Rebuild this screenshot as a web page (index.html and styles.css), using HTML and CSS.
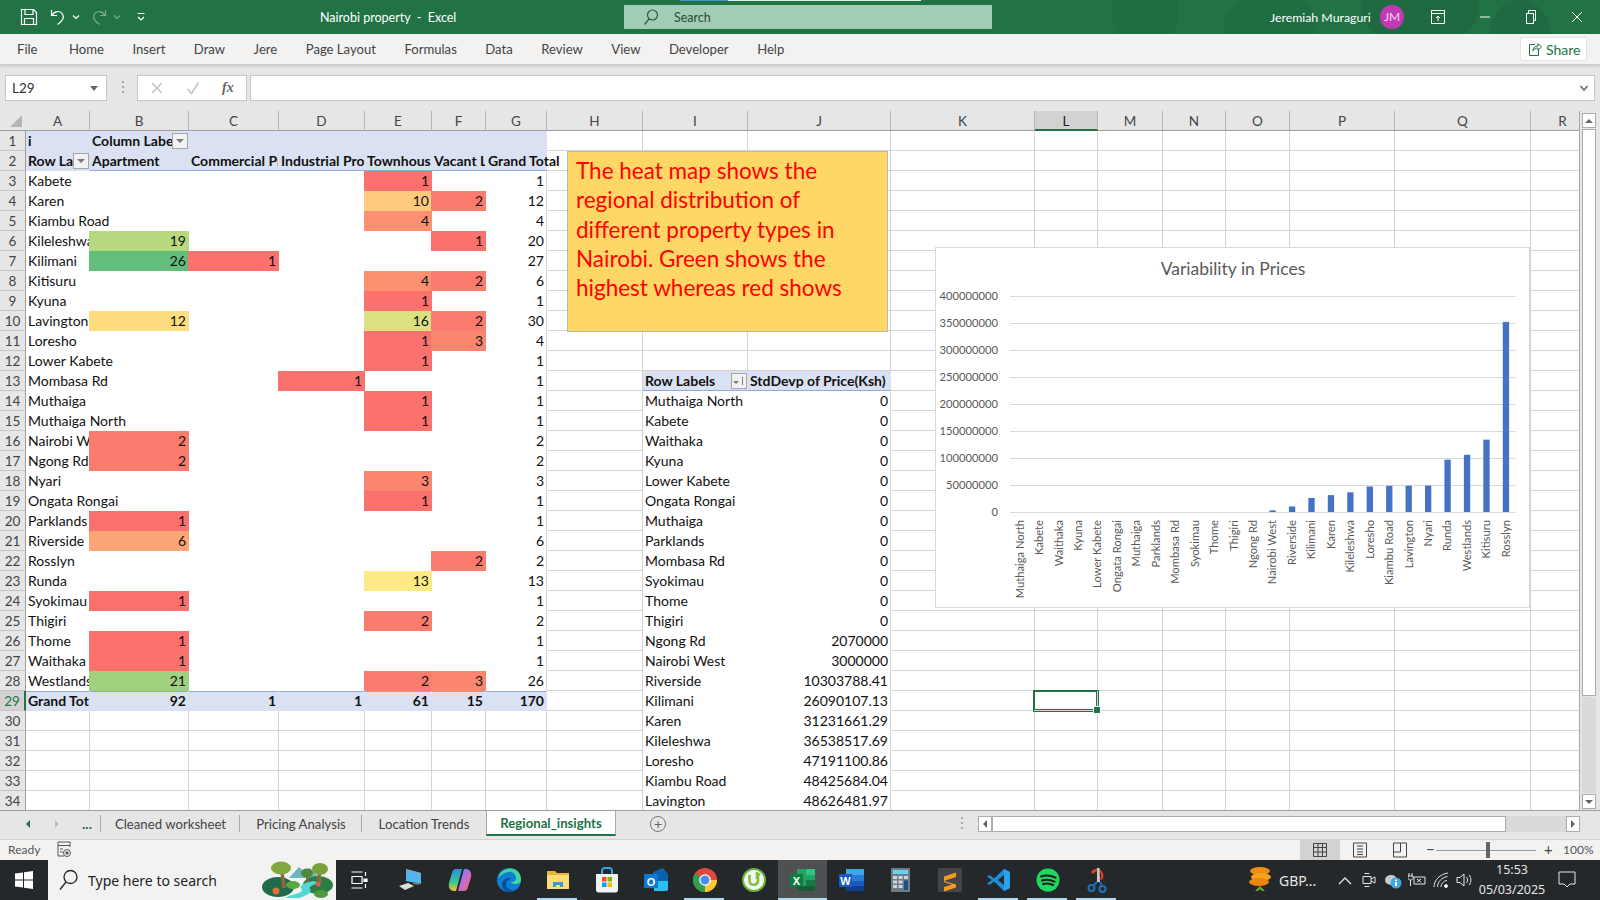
FILE: index.html
```html
<!DOCTYPE html>
<html lang="en">
<head>
    <meta charset="UTF-8">
    <title>Nairobi property - Excel</title>
    <link rel="stylesheet" href="styles.css">
</head>
<body>
    <header class="titlebar">
        <div class="qat">
            <svg class="qat-save" width="18" height="18" viewBox="0 0 18 18"><path d="M1.500 1.500h12l3 3v12h-15z"/><path d="M5 1.500v5h8v-5M4.500 16.500v-6h9v6"/></svg>
            <svg class="qat-undo" width="18" height="18" viewBox="0 0 18 18"><path d="M2.500 2v5.500H8M3 7.500C5 3 11 2 13.500 6c2 3.500-.5 7.500-5 10.500"/></svg>
            <svg class="qat-caret" width="8" height="6" viewBox="0 0 8 6"><path d="M1 1.500l3 3 3-3"/></svg>
            <svg class="qat-undo dim" width="18" height="18" viewBox="0 0 18 18"><path d="M15.500 2v5.500H10M15 7.500C13 3 7 2 4.500 6c-2 3.500.5 7.500 5 10.500"/></svg>
            <svg class="qat-caret dim" width="8" height="6" viewBox="0 0 8 6"><path d="M1 1.500l3 3 3-3"/></svg>
            <svg class="qat-more" width="10" height="10" viewBox="0 0 10 10"><path d="M1.500 1.500h7M2 5l3 3 3-3"/></svg>
        </div>
        <div class="doc-title">Nairobi property &nbsp;-&nbsp; Excel</div>
        <div class="search">
            <svg width="16" height="18" viewBox="0 0 16 18"><circle cx="9.500" cy="7" r="5"/><path d="M6 11l-4.500 5.500"/></svg>
            <span>Search</span>
        </div>
        <div class="account">
            <span class="user-name">Jeremiah Muraguri</span>
            <span class="avatar">JM</span>
            <svg class="win-icon display" width="14" height="14" viewBox="0 0 14 14"><path d="M.5.500h13v13H.5zM.5 3.500h13M7 11V6M5 8l2-2 2 2"/></svg>
            <svg class="win-icon" width="12" height="12" viewBox="0 0 12 12"><path d="M1 6h10"/></svg>
            <svg class="win-icon" width="12" height="14" viewBox="0 0 12 14"><path d="M1.500 3.500h7v10h-7zM3.500 3.500v-3h7v10h-2"/></svg>
            <svg class="win-icon" width="12" height="12" viewBox="0 0 12 12"><path d="M1 1l10 10M11 1L1 11"/></svg>
        </div>
    </header>

    <nav class="ribbon">
        <span class="file-tab">File</span>
        <span>Home</span>
        <span>Insert</span>
        <span>Draw</span>
        <span>Jere</span>
        <span>Page Layout</span>
        <span>Formulas</span>
        <span>Data</span>
        <span>Review</span>
        <span>View</span>
        <span>Developer</span>
        <span>Help</span>
        <button class="share">
            <svg width="14" height="16" viewBox="0 0 14 16"><path d="M7 3.500H1.500v11h9V9M5 10c0-3 2-5 5-5V2.500L13.500 6 10 9V7c-2 0-4 1-5 3z"/></svg>
            Share
        </button>
    </nav>

    <div class="formula-row">
        <div class="name-box">L29<i class="caret"></i></div>
        <div class="grip"></div>
        <div class="fx-box">
            <svg width="14" height="14" viewBox="0 0 14 14"><path d="M2 2l10 10M12 2L2 12"/></svg>
            <svg width="14" height="14" viewBox="0 0 14 14"><path d="M1.500 8l4 4.500 7-11"/></svg>
            <em>fx</em>
        </div>
        <div class="formula-input"><svg width="10" height="8" viewBox="0 0 10 8"><path d="M1.500 2L5 6l3.500-4"/></svg></div>
    </div>

    <main class="workspace">
        <div class="sheet" id="sheet">
            <div class="cells" id="cells"></div>
            <div class="note">The heat map shows the<br>regional distribution of<br>different property types in<br>Nairobi. Green shows the<br>highest whereas red shows</div>
            <div class="chart"><svg id="chart" width="593" height="359" viewBox="0 0 593 359"></svg></div>
        </div>
        <div class="vscroll">
            <div class="sb-btn"><i class="tri up"></i></div>
            <div class="sb-thumb"></div>
            <div class="sb-track"></div>
            <div class="sb-btn"><i class="tri down"></i></div>
        </div>
    </main>

    <div class="tabbar">
        <div class="tab-nav">
            <i class="tri left green"></i>
            <i class="tri right pale"></i>
            <b>...</b>
        </div>
        <div class="tab">Cleaned worksheet</div>
        <div class="tab">Pricing Analysis</div>
        <div class="tab">Location Trends</div>
        <div class="tab current">Regional_insights</div>
        <div class="add-sheet">+</div>
        <div class="tab-split"></div>
        <div class="hscroll">
            <div class="sb-btn"><i class="tri left"></i></div>
            <div class="hs-thumb"></div>
            <div class="hs-track"></div>
            <div class="sb-btn"><i class="tri right"></i></div>
        </div>
    </div>

    <footer class="statusbar">
        <span class="ready">Ready</span>
        <svg class="macro" width="15" height="18" viewBox="0 0 15 18"><path d="M1 1h12v5M1 1v14h6M1 4.500h12M3 8h3M3 11h3"/><circle cx="10" cy="12" r="3.500"/><circle cx="10" cy="12" r="1.200" class="solid"/></svg>
        <div class="view-btns">
            <span class="view-btn on"><svg width="14" height="16" viewBox="0 0 14 16"><path d="M.5 1.500h13v13H.5zM.5 5.500h13M.5 10h13M5 1.500v13M9.500 1.500v13"/></svg></span>
            <span class="view-btn"><svg width="14" height="16" viewBox="0 0 14 16"><path d="M.5 1h13v14H.5zM4 4h6M4 7h6M4 10h6M4 12.500h6"/></svg></span>
            <span class="view-btn"><svg width="14" height="16" viewBox="0 0 14 16"><path d="M.5 1h13v14H.5zM.5 10h7V1"/></svg></span>
        </div>
        <span class="zoom-sign minus">&minus;</span>
        <div class="slider"><i></i></div>
        <span class="zoom-sign">+</span>
        <span class="zoom-level">100%</span>
    </footer>

    <div class="taskbar">
        <div class="start">
            <svg width="18" height="18" viewBox="0 0 18 18"><path d="M0 2.500l8-1.100v7.100H0zM9 1.200L18 0v8.500H9zM0 9.500h8v7.100l-8-1.100zM9 9.500h9V18l-9-1.200z"/></svg>
        </div>
        <div class="task-search">
            <svg width="20" height="22" viewBox="0 0 20 22"><circle cx="12.500" cy="8" r="6.500"/><path d="M8 13l-6 7.500"/></svg>
            <span>Type here to search</span>
            <svg class="scene" width="74" height="40" viewBox="0 0 74 40">
                <path d="M28 18l10-11 6 5 5-4 9 10z" fill="#6fb2c4"/>
                <ellipse cx="17" cy="27" rx="16" ry="10" fill="#1f6a4a"/>
                <ellipse cx="57" cy="25" rx="15" ry="9" fill="#2a7d45"/>
                <path d="M19 8h3l3 20h-4z" fill="#8a6a3a"/>
                <path d="M57 8h2.500l1 16h-4.500z" fill="#8a6a3a"/>
                <path d="M45 14h2l1 9h-3z" fill="#8a6a3a"/>
                <ellipse cx="20" cy="8" rx="10" ry="6.500" fill="#7fa83f"/>
                <ellipse cx="59" cy="9" rx="8" ry="6" fill="#7aa23c"/>
                <ellipse cx="46" cy="13" rx="6" ry="4.500" fill="#4f8a3a"/>
                <path d="M24 38c8-5 20-4 16-10-2-3 6-6 13-7l5 2c-6 2-10 3-9 6 3 5-7 7-10 9z" fill="#54d6d6"/>
                <ellipse cx="32" cy="25" rx="7" ry="4" fill="#5aa63f"/>
                <ellipse cx="60" cy="34" rx="7" ry="4" fill="#4f9a3f"/>
                <circle cx="15" cy="31" r="3.500" fill="#e0703a"/>
                <circle cx="57" cy="24" r="2.500" fill="#d9604a"/>
            </svg>
        </div>
        <div class="task-app wide">
            <svg width="18" height="18" viewBox="0 0 18 18" class="line"><path d="M.5 1h11M.5 17h11M1 5.500h10v7H1zM14.500 1v4M14.500 13v4"/><path d="M13 8h3v2.500h-3z" fill="#fff"/></svg>
        </div>
        <div class="task-apps">
            <div class="task-app">
                <svg width="26" height="26" viewBox="0 0 26 26"><path d="M8 2l15 4v11l-15-3z" fill="#53b5f0"/><path d="M8 2l15 4v1L8 3z" fill="#9a9a9a"/><path d="M15 15l6 1v2l-6-1z" fill="#777"/><path d="M1 19l9-3 6 3-9 4z" fill="#ddd"/></svg>
            </div>
            <div class="task-app">
                <svg width="26" height="26" viewBox="0 0 26 26">
                    <defs>
                        <linearGradient id="cpA" x1="0" y1="0" x2="0" y2="1"><stop offset="0" stop-color="#2a8fe0"/><stop offset=".6" stop-color="#36c98f"/><stop offset="1" stop-color="#f6c02c"/></linearGradient>
                        <linearGradient id="cpB" x1="0" y1="0" x2="1" y2="1"><stop offset="0" stop-color="#5f8cf0"/><stop offset=".5" stop-color="#c26bd8"/><stop offset="1" stop-color="#f0703a"/></linearGradient>
                    </defs>
                    <path d="M9 2h6l-6 22H7C3 24 1 20 2 16l3-10c.6-2.500 2-4 4-4z" fill="url(#cpA)"/>
                    <path d="M17 24h-6l6-22h2c4 0 6 4 5 8l-3 10c-.6 2.500-2 4-4 4z" fill="url(#cpB)"/>
                </svg>
            </div>
            <div class="task-app">
                <svg width="26" height="26" viewBox="0 0 26 26"><circle cx="13" cy="13" r="12" fill="#0f7fd0"/><path d="M2 11C4 3 12 0 18 2c5 2 7 6 7 11 0 3-3 4-6 4-2 0-4-1-4-2 3 0 5-1 5-4 0-4-4-7-8-6-5 1-8 4-10 6z" fill="#42d6a0"/><path d="M10 24c-4-2-5-7-3-10 2-3 6-4 9-2-3 0-6 2-6 5 0 4 4 7 9 6-3 2-6 2-9 1z" fill="#0a4f9a"/></svg>
            </div>
            <div class="task-app open">
                <svg width="24" height="24" viewBox="0 0 24 24"><path d="M1 3h8l2 2h12v16H1z" fill="#e9b53a"/><path d="M1 7h22v14H1z" fill="#fbdd77"/><path d="M7 19v-5h10v5h-3v-2h-4v2z" fill="#3a96dd"/></svg>
            </div>
            <div class="task-app">
                <svg width="24" height="26" viewBox="0 0 24 26"><path d="M7 8V4c0-2 1-3 3-3h4c2 0 3 1 3 3v4" fill="none" stroke="#35a7e0" stroke-width="2"/><path d="M1 7h22v16c0 1.500-1 2.500-2.500 2.500h-17C2 25.500 1 24.500 1 23z" fill="#f2f2f2"/><path d="M7 10h4.500v4.500H7z" fill="#f25022"/><path d="M12.500 10H17v4.500h-4.500z" fill="#7fba00"/><path d="M7 15.500h4.500V20H7z" fill="#00a4ef"/><path d="M12.500 15.500H17V20h-4.500z" fill="#ffb900"/></svg>
            </div>
            <div class="task-app">
                <svg width="26" height="26" viewBox="0 0 26 26"><path d="M10 5l10-4 5 6v15c0 1-1 2-2 2H11z" fill="#0a62b0"/><path d="M11 14h14v8c0 1-1 2-2 2H11z" fill="#28c1ee"/><path d="M1 7h14v14H1z" fill="#0f78d4"/><text x="8" y="18.500" class="tile-letter">O</text></svg>
            </div>
            <div class="task-app open">
                <svg width="24" height="24" viewBox="0 0 24 24"><circle cx="12" cy="12" r="12" fill="#dd4b3d"/><path d="M12 12l-10.400 6A12 12 0 0 1 2 5.500z" fill="#2f9e4f"/><path d="M12 12l-10.400 6A12 12 0 0 0 12 24z" fill="#2f9e4f"/><path d="M12 12h12a12 12 0 0 1-12 12z" fill="#fcc934"/><circle cx="12" cy="12" r="5.800" fill="#fff"/><circle cx="12" cy="12" r="4.500" fill="#4a8af4"/></svg>
            </div>
            <div class="task-app">
                <svg width="24" height="24" viewBox="0 0 24 24"><circle cx="12" cy="12" r="11" fill="#f4f7ee" stroke="#6cb33f" stroke-width="2"/><path d="M7.500 7v6c0 5 8 5 8.500 0V7M15 4v7M18 6l-3 1" fill="none" stroke="#7ec04a" stroke-width="2.600"/></svg>
            </div>
            <div class="task-app active open">
                <svg width="26" height="24" viewBox="0 0 26 24"><path d="M7 1h18v22H7z" fill="#21a366"/><path d="M16 1h9v6h-9z" fill="#33c481"/><path d="M16 12h9v6h-9z" fill="#107c41"/><path d="M7 18h18v5H7z" fill="#185c37"/><path d="M0 6h13v13H0z" fill="#107c41"/><text x="6.500" y="16.500" class="tile-letter">X</text></svg>
            </div>
            <div class="task-app">
                <svg width="26" height="24" viewBox="0 0 26 24"><path d="M7 1h18v6H7z" fill="#41a5ee"/><path d="M7 7h18v6H7z" fill="#2b7cd3"/><path d="M7 13h18v5H7z" fill="#185abd"/><path d="M7 18h18v5H7z" fill="#103f91"/><path d="M0 6h13v13H0z" fill="#185abd"/><text x="6.500" y="16.500" class="tile-letter">W</text></svg>
            </div>
            <div class="task-app">
                <svg width="19" height="24" viewBox="0 0 19 24"><path d="M0 0h19v24H0z" fill="#6f7c85"/><path d="M2 2h15v4H2z" fill="#68d2ee"/><path d="M2 8h4v3H2zM7.500 8h4v3h-4zM13 8h4v3h-4zM2 12.500h4v3H2zM7.500 12.500h4v3h-4zM2 17h4v3H2zM7.500 17h4v3h-4z" fill="#ccd6dd"/><path d="M13 12.500h4V22h-4z" fill="#1a4f8a"/></svg>
            </div>
            <div class="task-app">
                <svg width="24" height="24" viewBox="0 0 24 24"><rect width="24" height="24" rx="2" fill="#454545"/><path d="M6 8.500l12-4v4.500l-12 4zM6 13l12 3.500v3l-12 4v-4.500l8-2.500-8-2.200z" fill="#f89a1c"/></svg>
            </div>
            <div class="task-app open">
                <svg width="24" height="24" viewBox="0 0 24 24"><path d="M17 1l6 3v16l-6 3-10-9.500-4.500 3.500L0 15.500 5 12 0 8.500 2.500 7 7 10.500z" fill="#1b8ddb"/><path d="M17 7l-6 5 6 5z" fill="#262626"/><path d="M17 1l6 3v16l-6 3z" fill="#2aa3ef"/></svg>
            </div>
            <div class="task-app open">
                <svg width="24" height="24" viewBox="0 0 24 24"><circle cx="12" cy="12" r="11.500" fill="#1ed760"/><path d="M5 8.500c5-1.500 10-1 14.500 1.200M6 12.500c4.500-1.200 8.500-.8 12.500 1.200M7 16c3.500-1 7-.6 10 1" fill="none" stroke="#1a1a1a" stroke-width="2" stroke-linecap="round"/></svg>
            </div>
            <div class="task-app open">
                <svg width="22" height="26" viewBox="0 0 22 26"><path d="M5 5c2-3 5-4 8-3 4 2 6 7 3 11l-2-1c2-3 1-7-2-8-2 0-3 1-5 3z" fill="#d8401f"/><path d="M11 1h2.500l.5 14h-3z" fill="#c9c9c9"/><path d="M11 15l-3 3M14 15l2 3" stroke="#1b72c0" stroke-width="2"/><circle cx="5.500" cy="21" r="3" fill="none" stroke="#1b72c0" stroke-width="2"/><circle cx="16.500" cy="22" r="3" fill="none" stroke="#1b72c0" stroke-width="2"/></svg>
            </div>
        </div>
        <div class="tray">
            <div class="ticker">
                <svg width="24" height="28" viewBox="0 0 24 28"><ellipse cx="12" cy="5" rx="10" ry="4" fill="#f28c13"/><ellipse cx="13" cy="11" rx="10" ry="4" fill="#f8a11f"/><ellipse cx="11" cy="16" rx="10" ry="4" fill="#ee8510"/><path d="M7 25l5-5 5 5h-3l-2-2-2 2z" fill="#6faf2c"/></svg>
                <span>GBP...</span>
            </div>
            <svg class="tray-icon chevron" width="14" height="9" viewBox="0 0 14 9"><path d="M1 8l6-6 6 6"/></svg>
            <svg class="tray-icon meet" width="15" height="18" viewBox="0 0 15 18"><path d="M1 5.500h8v7H1zM9 8l4-2v6l-4-2M2.500 2.500h5M2.500 15.500h5"/></svg>
            <svg class="onedrive" width="18" height="18" viewBox="0 0 18 18"><ellipse cx="7" cy="9" rx="6" ry="5" fill="#c9c9c9"/><circle cx="12" cy="12" r="5.500" fill="#3ea6e8"/><path d="M11 11h2v4h-2zM11 8.500h2v1.500h-2z" fill="#fff"/></svg>
            <svg class="tray-icon battery" width="18" height="18" viewBox="0 0 18 18"><path d="M1 2v3M4 2v3M0 5h5v2.500L3.500 9H1.500L0 7.500zM2.500 9v6M6 6h11v7H6zM9 8l4 3M13 8l-4 3"/></svg>
            <svg class="tray-icon wifi" width="18" height="18" viewBox="0 0 18 18"><path d="M1 16C1 9 7 3 15 2M4.500 16c0-5 4-9.500 10-10.500M8 16c0-3 2-6 6-6.500"/><circle cx="13" cy="15" r="1.500" fill="#fff"/></svg>
            <svg class="tray-icon sound" width="17" height="18" viewBox="0 0 17 18"><path d="M1 6.500h3L8 3v12l-4-3.500H1zM10.500 6c1.500 1.500 1.500 4.500 0 6M13 4c2.500 2.500 2.500 7.500 0 10"/></svg>
            <div class="clock"><div>15:53</div><div>05/03/2025</div></div>
            <svg class="tray-icon notify" width="18" height="18" viewBox="0 0 18 18"><path d="M1 1h16v12h-5l-3 3-3-3H1z"/></svg>
        </div>
    </div>

    <script src="script.js"></script>
</body>
</html>
```

FILE: styles.css
```css
* {
    box-sizing: border-box;
}
body {
    margin: 0;
    width: 1600px;
    height: 900px;
    overflow: hidden;
    display: flex;
    flex-direction: column;
    font-family: Lato, "Noto Sans", sans-serif;
    background: #e6e6e6;
}
svg {
    display: block;
    flex: none;
}

/* title bar */
.titlebar {
    height: 34px;
    flex: none;
    display: flex;
    align-items: center;
    color: #fff;
    background-color: #217346;
    background-image:
        radial-gradient(ellipse 34px 40px at 1145px 10px, #1f6d43 98%, transparent),
        radial-gradient(ellipse 48px 30px at 1270px 24px, #1f6d43 98%, transparent),
        radial-gradient(ellipse 60px 44px at 1420px 6px, #1f6a42 98%, transparent),
        radial-gradient(ellipse 30px 30px at 1520px 30px, #1f6a42 98%, transparent);
}
.titlebar::before {
    content: "";
    position: absolute;
    left: 680px;
    top: 0;
    width: 241px;
    height: 1px;
    background: linear-gradient(90deg, #3f8ed0 0 20%, #e8efe9 20%);
}
.qat {
    width: 320px;
    display: flex;
    align-items: center;
    padding-left: 20px;
}
.qat svg {
    fill: none;
    stroke: #fff;
    stroke-width: 1.200;
}
.qat-undo {
    margin-left: 10px;
}
.qat-save + .qat-undo {
    margin-left: 11px;
}
.qat-caret {
    margin-left: 5px;
}
.qat .dim {
    opacity: .4;
}
.qat-more {
    margin-left: 15px;
}
.doc-title {
    width: 304px;
    font-size: 12.500px;
}
.search {
    width: 368px;
    height: 24px;
    display: flex;
    align-items: center;
    gap: 15px;
    padding-left: 19px;
    background: #a0cdb4;
    color: #2d4a3a;
    font-size: 12.500px;
}
.search svg {
    fill: none;
    stroke: #2d5a42;
    stroke-width: 1.200;
}
.account {
    flex: 1;
    display: flex;
    align-items: center;
    padding-left: 278px;
    font-size: 12.300px;
}
.user-name {
    width: 110px;
}
.avatar {
    width: 24px;
    height: 24px;
    border-radius: 50%;
    background: #c239b3;
    text-align: center;
    line-height: 24px;
    font-size: 12px;
    color: #f3d8f0;
}
.win-icon {
    fill: none;
    stroke: #fff;
    stroke-width: 1;
    margin-left: 34px;
}
.win-icon.display {
    margin-left: 27px;
}

/* ribbon tabs */
.ribbon {
    height: 30px;
    flex: none;
    display: flex;
    align-items: center;
    gap: 28.500px;
    padding-left: 17px;
    background: #f3f2f1;
    color: #444;
    font-size: 13.100px;
    box-shadow: 0 2px 3px rgba(0, 0, 0, .14);
    position: relative;
}
.file-tab {
    margin-right: 3px;
}
.share {
    position: absolute;
    left: 1520px;
    top: 3px;
    width: 67px;
    height: 24px;
    display: flex;
    align-items: center;
    gap: 4px;
    padding: 0 0 0 7px;
    background: #fff;
    border: 1px solid #e3e3e3;
    border-radius: 2px;
    font: 14px Lato, sans-serif;
    color: #217346;
}
.share svg {
    fill: none;
    stroke: #217346;
}

/* name box and formula bar */
.formula-row {
    height: 47px;
    flex: none;
    display: flex;
    padding: 11px 5px 10px 5px;
    background: #e6e6e6;
}
.name-box,
.fx-box,
.formula-input {
    background: #fff;
    border: 1px solid #c8c8c8;
}
.name-box {
    width: 102px;
    padding-left: 6px;
    font-size: 13.500px;
    line-height: 24px;
    color: #333;
    position: relative;
}
.caret {
    position: absolute;
    right: 8px;
    top: 10px;
    border: 4px solid transparent;
    border-top: 5px solid #666;
    border-bottom: 0;
}
.grip {
    width: 30px;
    position: relative;
}
.grip::after {
    content: "";
    position: absolute;
    left: 15px;
    top: 6px;
    width: 2px;
    height: 2px;
    background: #aaa;
    box-shadow: 0 5px #aaa, 0 10px #aaa;
}
.fx-box {
    width: 110px;
    display: flex;
    align-items: center;
    gap: 22px;
    padding-left: 12px;
}
.fx-box svg {
    fill: none;
    stroke: #c2c2c2;
    stroke-width: 1.500;
}
.fx-box em {
    font: italic bold 14px "Liberation Serif", serif;
    color: #666;
}
.formula-input {
    flex: 1;
    margin-left: 3px;
    display: flex;
    align-items: center;
    justify-content: flex-end;
    padding-right: 5px;
}
.formula-input svg {
    fill: none;
    stroke: #666;
    stroke-width: 1.500;
}

/* sheet */
.workspace {
    height: 699px;
    flex: none;
    display: flex;
}
.sheet {
    width: 1580px;
    flex: none;
    position: relative;
    overflow: hidden;
    border-right: 1px solid #a8a8a8;
}
.cells {
    display: grid;
    grid-template-columns: 26px 64px 99px 90px 86px 67px 54px 61px 96px 105px 143px 144px 63px 65px 63px 64px 105px 136px 64px;
    grid-auto-rows: 20px;
    background: #fff;
    font-size: 14px;
    line-height: 20px;
    color: #111;
}
.cell {
    border-right: 1px solid #d4d4d4;
    border-bottom: 1px solid #d4d4d4;
    padding: 0 2px;
    white-space: nowrap;
    overflow: hidden;
    position: relative;
}
.cell.spill {
    overflow: visible;
}
.cell.num {
    text-align: right;
}
.cell.plain {
    border-color: transparent;
}
.cell.edge {
    border-right-color: #d4d4d4;
}
.cell.band {
    background: #d9e1f2;
    font-weight: 700;
    border-color: transparent;
}
.cell.band-head {
    border-bottom-color: #8ea9db;
}
.cell.total {
    box-shadow: inset 0 1px 0 #8ea9db;
}
.cell.corner,
.cell.col-head,
.cell.row-head {
    background: #e6e6e6;
    color: #444;
    text-align: center;
    font-size: 13.500px;
    overflow: visible;
    padding: 0;
}
.cell.corner {
    border-right: 0;
    border-bottom: 1px solid #9e9e9e;
}
.cell.corner::after {
    content: "";
    position: absolute;
    left: 10px;
    top: 4px;
    width: 12px;
    height: 12px;
    background: #b5b5b5;
    clip-path: polygon(100% 0, 100% 100%, 0 100%);
}
.cell.col-head {
    border-right: 1px solid #b5b5b5;
    border-bottom: 1px solid #9e9e9e;
    border-left: 0;
}
.cell.col-head.picked {
    background: #d2d2d2;
    border-bottom: 2px solid #217346;
    color: #222;
}
.cell.row-head {
    border-right: 1px solid #9e9e9e;
    border-bottom: 1px solid #c6c6c6;
}
.cell.row-head.picked {
    background: #d2d2d2;
    border-right: 2px solid #217346;
    color: #217346;
}
.cell.active {
    overflow: visible;
    z-index: 2;
    margin-left: -1px;
    box-shadow: 0 0 0 1px #217346, inset 0 0 0 1px #217346;
}
.cell.active::after {
    content: "";
    position: absolute;
    right: -4px;
    bottom: -4px;
    width: 6px;
    height: 6px;
    background: #217346;
    border: 1px solid #fff;
}

/* heat map colours, a fill covers the gridline to its left */
.heat {
    margin-left: -1px;
}
.heat-1 { background: #fa716d; }
.heat-2 { background: #fa7c6e; }
.heat-3 { background: #fb866f; }
.heat-4 { background: #fc9071; }
.heat-6 { background: #fda575; }
.heat-10 { background: #fecb7c; }
.heat-12 { background: #fedd81; }
.heat-13 { background: #ffe984; }
.heat-16 { background: #dbe081; }
.heat-19 { background: #b8d87f; }
.heat-21 { background: #9fd17e; }
.heat-26 { background: #63be7b; }

.filter {
    position: absolute;
    right: 0;
    top: 2px;
    width: 16px;
    height: 16px;
    background: #f2f2f2;
    border: 1px solid #a6a6a6;
}
.filter::after {
    content: "";
    position: absolute;
    left: 3px;
    top: 5px;
    border: 4px solid transparent;
    border-top: 4px solid #7a7a7a;
    border-bottom: 0;
}
.filter.sorted::after {
    left: 1px;
    top: 7px;
    border-width: 3px;
    border-bottom: 0;
}
.filter.sorted::before {
    content: "";
    position: absolute;
    right: 3px;
    top: 3px;
    width: 1px;
    height: 8px;
    background: #7a7a7a;
}

/* floating note and chart */
.note {
    position: absolute;
    left: 567px;
    top: 40px;
    width: 321px;
    height: 181px;
    padding: 4px 8px;
    background: #ffd766;
    border: 1px solid #b8b8b8;
    color: #f00;
    font-size: 22.500px;
    line-height: 29.300px;
    overflow: hidden;
}
.chart {
    position: absolute;
    left: 935px;
    top: 136px;
    width: 595px;
    height: 361px;
    background: #fff;
    border: 1px solid #d9d9d9;
}
.chart text {
    font-family: Lato, sans-serif;
    fill: #595959;
    font-size: 11.200px;
}
.chart .chart-title {
    font-size: 17.500px;
}

/* scrollbars */
.vscroll {
    flex: 1;
    display: flex;
    flex-direction: column;
    padding: 2px 4px 1px 2px;
    gap: 1px;
}
.sb-btn {
    height: 15px;
    width: 14px;
    flex: none;
    background: #fff;
    border: 1px solid #ababab;
    display: flex;
    align-items: center;
    justify-content: center;
}
.sb-thumb {
    height: 567px;
    background: #fff;
    border: 1px solid #ababab;
}
.sb-track {
    flex: 1;
    background: #dadada;
}
.tri {
    display: block;
    width: 0;
    height: 0;
    border: 4px solid transparent;
}
.tri.up {
    border-top: 0;
    border-bottom-color: #666;
}
.tri.down {
    border-bottom: 0;
    border-top-color: #666;
}
.tri.left {
    border-left: 0;
    border-right-color: #666;
}
.tri.right {
    border-right: 0;
    border-left-color: #666;
}
.tri.green {
    border-right-color: #217346;
}
.tri.pale {
    border-left-color: #bdbdbd;
}

/* sheet tabs */
.tabbar {
    height: 29px;
    flex: none;
    display: flex;
    align-items: flex-start;
    background: #e6e6e6;
    border-top: 1px solid #9e9e9e;
    font-size: 13.200px;
    color: #444;
}
.tab-nav {
    width: 101px;
    height: 25px;
    display: flex;
    align-items: center;
    padding-left: 26px;
    gap: 25px;
    position: relative;
}
.tab-nav b {
    color: #217346;
    font-size: 14px;
    margin-left: -2px;
}
.tab {
    height: 25px;
    display: flex;
    align-items: center;
    justify-content: center;
    position: relative;
}
.tab:nth-child(2) { width: 139px; }
.tab:nth-child(3) { width: 122px; }
.tab:nth-child(4) { width: 124px; }
.tab::before {
    content: "";
    position: absolute;
    left: -1px;
    top: 4px;
    bottom: 4px;
    width: 1px;
    background: #a8a8a8;
}
.tab.current {
    width: 130px;
    background: #fff;
    color: #217346;
    font-weight: 700;
    border-left: 1px solid #a8a8a8;
    border-right: 1px solid #a8a8a8;
    border-bottom: 2px solid #217346;
}
.tab.current::before {
    display: none;
}
.add-sheet {
    width: 16px;
    height: 16px;
    margin: 5px 0 0 34px;
    border: 1px solid #777;
    border-radius: 50%;
    text-align: center;
    font-size: 14px;
    line-height: 13px;
    color: #666;
}
.tab-split {
    width: 2px;
    height: 14px;
    margin: 6px 0 0 295px;
    background: repeating-linear-gradient(#aaa 0 2px, transparent 2px 5px);
}
.hscroll {
    width: 602px;
    height: 16px;
    margin: 5px 0 0 15px;
    display: flex;
}
.hscroll .sb-btn {
    height: 16px;
}
.hs-thumb {
    width: 514px;
    background: #fff;
    border: 1px solid #ababab;
}
.hs-track {
    flex: 1;
    background: #dadada;
}

/* status bar */
.statusbar {
    height: 21px;
    flex: none;
    display: flex;
    align-items: center;
    background: #f3f2f1;
    border-top: 1px solid #d0d0d0;
    font-size: 12px;
    color: #555;
    padding-left: 8px;
}
.ready {
    width: 49px;
    margin-top: -2px;
}
.macro {
    fill: none;
    stroke: #555;
    stroke-width: 1;
}
.macro .solid {
    fill: #555;
}
.view-btns {
    margin-left: 1228px;
    display: flex;
}
.view-btn {
    width: 40px;
    height: 20px;
    display: flex;
    align-items: center;
    justify-content: center;
}
.view-btn svg {
    fill: none;
    stroke: #444;
}
.view-btn.on {
    background: #d2d2d2;
}
.zoom-sign {
    font-size: 15px;
    width: 10px;
    color: #444;
    margin-top: -2px;
}
.zoom-sign.minus {
    margin-left: 6px;
}
.slider {
    width: 100px;
    height: 1px;
    background: #999;
    margin-right: 8px;
    position: relative;
}
.slider i {
    position: absolute;
    left: 50px;
    top: -8px;
    width: 4px;
    height: 16px;
    background: #666;
}
.zoom-level {
    margin-left: 9px;
    margin-top: -2px;
}

/* windows taskbar */
.taskbar {
    height: 40px;
    flex: none;
    display: flex;
    align-items: center;
    background: #25282a;
}
.start {
    width: 48px;
    flex: none;
    display: flex;
    justify-content: center;
}
.start svg {
    fill: #fff;
}
.task-search {
    width: 288px;
    height: 40px;
    flex: none;
    display: flex;
    align-items: center;
    background: #f2f2f2;
    color: #222;
    font: 14px "Noto Sans", sans-serif;
    position: relative;
    padding-left: 10px;
}
.task-search > svg:first-child {
    fill: none;
    stroke: #222;
    stroke-width: 1.300;
    margin-right: 10px;
}
.scene {
    position: absolute;
    right: 1px;
    top: 0;
}
.task-apps {
    display: flex;
    flex: none;
    margin-left: 2px;
}
.task-app {
    width: 49px;
    height: 40px;
    flex: none;
    display: flex;
    align-items: center;
    justify-content: center;
    position: relative;
}
.task-app.wide {
    width: 48px;
}
.line {
    fill: none;
    stroke: #fff;
    stroke-width: 1.200;
}
.task-app.active {
    background: #4f5051;
}
.task-app.open::after {
    content: "";
    position: absolute;
    left: 4px;
    right: 5px;
    bottom: 0;
    height: 2px;
    background: #a9dcf7;
}
.task-app.active.open::after {
    left: 0;
    right: 0;
}
.tile-letter {
    font: 700 11px "Liberation Sans", sans-serif;
    fill: #fff;
    text-anchor: middle;
}
.tray {
    flex: 1;
    display: flex;
    align-items: center;
    color: #e6e6e6;
    font: 13px "Noto Sans", sans-serif;
    padding-left: 127px;
}
.ticker {
    display: flex;
    align-items: center;
    gap: 7px;
    width: 90px;
    font-size: 14px;
}
.tray-icon {
    fill: none;
    stroke: #e6e6e6;
    stroke-width: 1;
}
.chevron {
    stroke-width: 1.300;
}
.meet {
    margin-left: 9.500px;
}
.onedrive {
    margin-left: 7.500px;
}
.battery {
    margin-left: 6px;
}
.wifi {
    margin-left: 7px;
}
.sound {
    margin-left: 4.500px;
}
.clock {
    width: 78px;
    margin-left: .5px;
    text-align: center;
    font-size: 12.500px;
    line-height: 20px;
}
.notify {
    margin-left: 7px;
}
```

FILE: script.js
```js
// pivot data, columns A to G, rows 3 to 28
const pivot = [
    "Kabete||||1||1",
    "Karen||||10|2|12",
    "Kiambu Road||||4||4",
    "Kileleshwa|19||||1|20",
    "Kilimani|26|1||||27",
    "Kitisuru||||4|2|6",
    "Kyuna||||1||1",
    "Lavington|12|||16|2|30",
    "Loresho||||1|3|4",
    "Lower Kabete||||1||1",
    "Mombasa Rd|||1|||1",
    "Muthaiga||||1||1",
    "Muthaiga North||||1||1",
    "Nairobi West|2|||||2",
    "Ngong Rd|2|||||2",
    "Nyari||||3||3",
    "Ongata Rongai||||1||1",
    "Parklands|1|||||1",
    "Riverside|6|||||6",
    "Rosslyn|||||2|2",
    "Runda||||13||13",
    "Syokimau|1|||||1",
    "Thigiri||||2||2",
    "Thome|1|||||1",
    "Waithaka|1|||||1",
    "Westlands|21|||2|3|26"
];

const spread = [
    ["Muthaiga North", "0"], ["Kabete", "0"], ["Waithaka", "0"], ["Kyuna", "0"],
    ["Lower Kabete", "0"], ["Ongata Rongai", "0"], ["Muthaiga", "0"], ["Parklands", "0"],
    ["Mombasa Rd", "0"], ["Syokimau", "0"], ["Thome", "0"], ["Thigiri", "0"],
    ["Ngong Rd", "2070000"], ["Nairobi West", "3000000"], ["Riverside", "10303788.41"],
    ["Kilimani", "26090107.13"], ["Karen", "31231661.29"], ["Kileleshwa", "36538517.69"],
    ["Loresho", "47191100.86"], ["Kiambu Road", "48425684.04"], ["Lavington", "48626481.97"]
];

// the last bars are past the visible rows, read off the chart
const chartData = spread.map(r => [r[0], Number(r[1])]).concat([
    ["Nyari", 49000000], ["Runda", 97000000], ["Westlands", 106000000],
    ["Kitisuru", 134000000], ["Rosslyn", 352000000]
]);

const COLS = "ABCDEFGHIJKLMNOPQR";
const ROWS = 34;

function buildCells() {
    const grid = [];
    for (let r = 1; r <= ROWS; r++) {
        grid[r] = COLS.split("").map(() => ({ text: "", cls: [] }));
    }

    function put(r, c, text, ...cls) {
        grid[r][c].text = text;
        grid[r][c].cls.push(...cls);
    }

    // first pivot
    for (let r = 1; r <= 29; r++) {
        for (let c = 0; c < 7; c++) {
            if (r <= 2) grid[r][c].cls.push("band");
            else if (r === 29) grid[r][c].cls.push("band", "total");
            else grid[r][c].cls.push("plain");
            if (c === 6) grid[r][c].cls.push("edge");
            if (r === 2) grid[r][c].cls.push("band-head");
        }
    }
    put(1, 0, "i");
    put(1, 1, "Column Labels");
    ["Row Labels", "Apartment", "Commercial Property", "Industrial Property", "Townhouse", "Vacant Land", "Grand Total"]
        .forEach((t, c) => put(2, c, t));
    pivot.forEach((line, i) => {
        line.split("|").forEach((v, c) => {
            if (v === "") return;
            put(i + 3, c, v);
            if (c > 0 && c < 6) grid[i + 3][c].cls.push("heat", "heat-" + v);
        });
    });
    ["Grand Total", "92", "1", "1", "61", "15", "170"].forEach((t, c) => put(29, c, t));

    // second pivot
    put(13, 8, "Row Labels", "band", "band-head");
    put(13, 9, "StdDevp of Price(Ksh)", "band", "band-head", "edge");
    spread.forEach((row, i) => {
        put(14 + i, 8, row[0], "plain");
        put(14 + i, 9, row[1], "plain", "edge");
    });

    grid[29][11].cls.push("active");

    const host = document.getElementById("cells");
    let html = '<div class="cell corner"></div>';
    COLS.split("").forEach((c, i) => {
        html += `<div class="cell col-head${i === 11 ? " picked" : ""}">${c}</div>`;
    });
    for (let r = 1; r <= ROWS; r++) {
        html += `<div class="cell row-head${r === 29 ? " picked" : ""}">${r}</div>`;
        grid[r].forEach((cell, c) => {
            const cls = ["cell", ...cell.cls];
            const isNum = cell.text !== "" && !isNaN(cell.text);
            const next = grid[r][c + 1];
            if (isNum) cls.push("num");
            else if (cell.text && next && !next.text) cls.push("spill");
            let extra = "";
            if ((r === 1 && c === 1) || (r === 2 && c === 0)) {
                extra = '<span class="filter"></span>';
                cls.splice(cls.indexOf("spill"), 1);
            }
            if (r === 13 && c === 8) {
                extra = '<span class="filter sorted"></span>';
            }
            html += `<div class="${cls.join(" ")}">${cell.text}${extra}</div>`;
        });
    }
    host.innerHTML = html;
}

function svgEl(name, attrs, text) {
    const el = document.createElementNS("http://www.w3.org/2000/svg", name);
    Object.keys(attrs).forEach(k => el.setAttribute(k, attrs[k]));
    if (text) el.textContent = text;
    return el;
}

function buildChart() {
    const svg = document.getElementById("chart");
    const left = 74, right = 579.500, top = 48, step = 27;
    const zero = top + step * 8;
    const slot = (right - left) / chartData.length;

    svg.appendChild(svgEl("text", { x: 297, y: 27, "text-anchor": "middle", class: "chart-title" }, "Variability in Prices"));

    for (let i = 0; i <= 8; i++) {
        const y = top + step * i;
        svg.appendChild(svgEl("line", { x1: left, x2: right, y1: y + .5, y2: y + .5, stroke: "#d9d9d9" }));
        svg.appendChild(svgEl("text", { x: 62, y: y + 4, "text-anchor": "end" }, String((8 - i) * 50000000)));
    }

    chartData.forEach((d, i) => {
        const cx = left + slot * (i + .5);
        const h = d[1] / 400000000 * (step * 8);
        if (h > 1.500) {
            svg.appendChild(svgEl("rect", { x: cx - 3, y: zero - h, width: 6.300, height: h, fill: "#4472c4" }));
        }
        svg.appendChild(svgEl("text", {
            x: 0, y: 0, "text-anchor": "end",
            transform: `translate(${cx + 4} ${zero + 8}) rotate(-90)`
        }, d[0]));
    });
}

buildCells();
buildChart();
```
